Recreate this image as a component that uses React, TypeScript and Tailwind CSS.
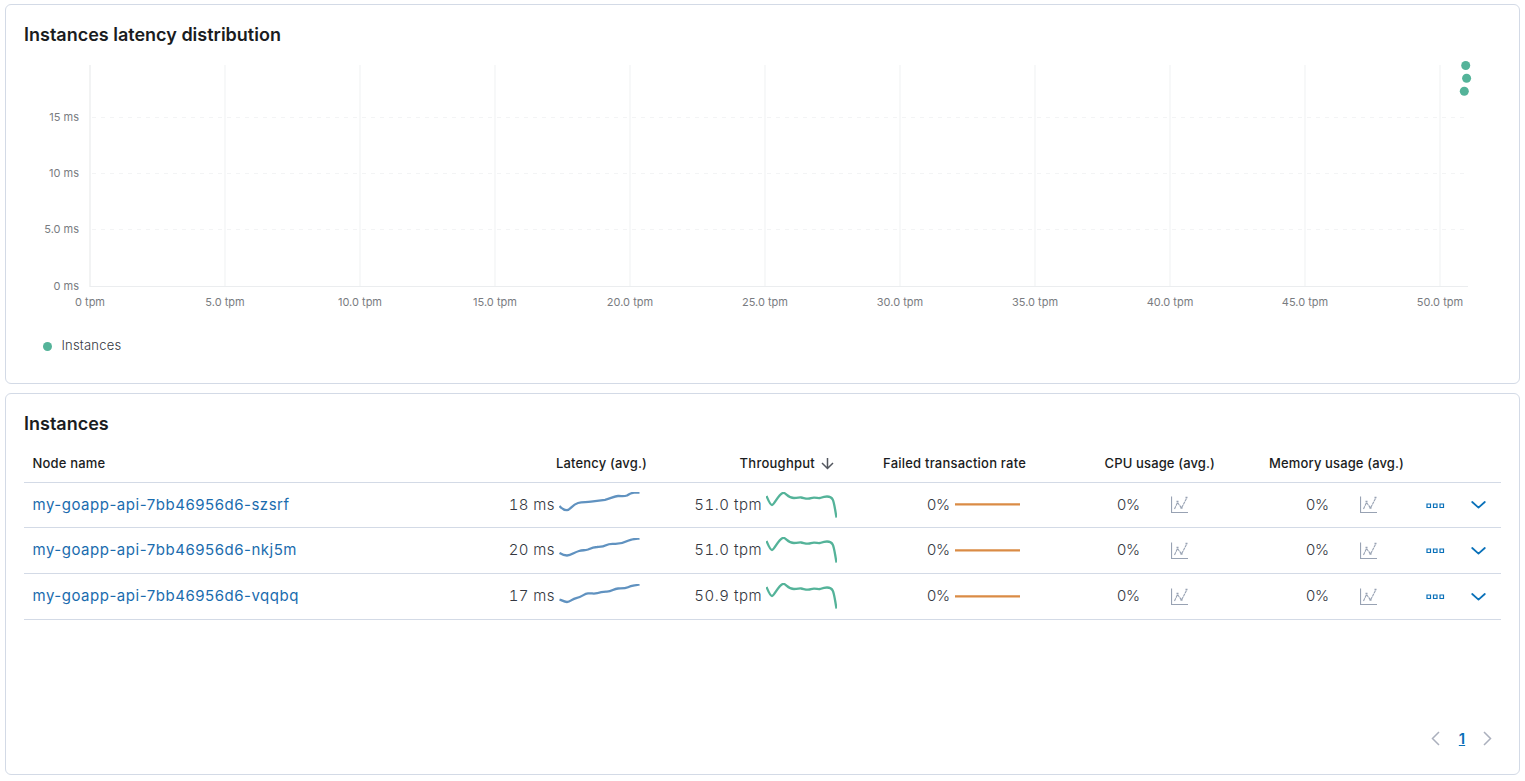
import React from 'react';

interface InstanceRow {
  name: string;
  latency: string;
  throughput: string;
  failedRate: string;
  cpu: string;
  memory: string;
  latencyPath: string;
  rowClass: string;
}

const THROUGHPUT_PATH =
  'M0.5 4 C2 7.5 4 13 6 13 C8.5 13 13 0.8 17.5 0.8 C20 0.8 22 6 28 6 C32 6 33 5.3 35 5.5 C38 6 39 6.7 42 6.7 C45 6.7 45 5.7 48 5.7 C51 5.7 52 6.3 54 6 C57 5 59 4.5 61 4.5 C68 4.5 67.5 9 70.5 25.5';

const rows: InstanceRow[] = [
  {
    name: 'my-goapp-api-7bb46956d6-szsrf',
    latency: '18 ms',
    throughput: '51.0 tpm',
    failedRate: '0%',
    cpu: '0%',
    memory: '0%',
    latencyPath:
      'M0.5 14 C3 17 6 18.2 8 18.2 C11 18.2 13 13 19 11 C24 9.8 27 10.5 32 9.7 L46 7.8 C52 6.5 55 4.2 59 4 C63 3.9 65 4.5 68 3.5 C71 1.5 72 1 75 0.7 L80.5 0.5',
    rowClass: 'h-[45px]',
  },
  {
    name: 'my-goapp-api-7bb46956d6-nkj5m',
    latency: '20 ms',
    throughput: '51.0 tpm',
    failedRate: '0%',
    cpu: '0%',
    memory: '0%',
    latencyPath:
      'M0.5 15 C3 16.5 6 17.5 8 17.5 C12 17.5 15 14.5 20 13 C24 12 26 12.5 29 11.5 C33 9.7 35 9 38 9 C42 8.8 44 9 47 7.3 C50 5.6 51 5.7 55 5.9 C62 6.3 65 4.8 69 2.8 C73 1 75 1 80.5 0.5',
    rowClass: 'h-[46px]',
  },
  {
    name: 'my-goapp-api-7bb46956d6-vqqbq',
    latency: '17 ms',
    throughput: '50.9 tpm',
    failedRate: '0%',
    cpu: '0%',
    memory: '0%',
    latencyPath:
      'M0.5 15.5 C3 16.5 6 18 8 18 C12 18 12 15 18 13.8 C23 13 25 9.7 29 9.4 C33 9.2 35 10 38 9.2 C41 8 44 7.6 47 7.6 C53 8.1 54 4.7 59 4.5 C64 4.4 66 4.7 69 3.2 C73 1.6 76 1.6 80.5 0.3',
    rowClass: 'h-[46px]',
  },
];

const xTicks = ['0', '5.0', '10.0', '15.0', '20.0', '25.0', '30.0', '35.0', '40.0', '45.0', '50.0'];

const yTicks = [
  { label: '15 ms', y: 117.5 },
  { label: '10 ms', y: 173.5 },
  { label: '5.0 ms', y: 229.5 },
  { label: '0 ms', y: 286.5 },
];

const points = [
  { x: 1465.7, y: 65.5 },
  { x: 1466.6, y: 78.3 },
  { x: 1464.3, y: 91.3 },
];

const GRID = 'grid grid-cols-[446px_185px_188px_191px_189px_189px_45px_44px]';

function LatencyChart() {
  return (
    <svg className="block h-[265px] w-full" viewBox="6 55 1513 265">
      {/* Grid lines */}
      {xTicks.map((tick, i) => (
        <line
          key={tick}
          x1={90 + i * 135}
          x2={90 + i * 135}
          y1={65}
          y2={287}
          stroke={i === 0 ? '#eff0f1' : '#f4f5f6'}
          strokeWidth={i === 0 ? 1.6 : 1.4}
        />
      ))}
      {yTicks.slice(0, 3).map((tick) => (
        <line key={tick.label} x1={92} x2={1468} y1={tick.y} y2={tick.y} stroke="#f3f4f5" strokeDasharray="4 5" />
      ))}
      <line x1={90} x2={1468} y1={286.5} y2={286.5} stroke="#ebedef" />

      {/* Axis labels */}
      <g className="fill-[#797c81] font-['Inter'] text-[11px]">
        {yTicks.map((tick) => (
          <text key={tick.label} x={79} y={tick.y + 3.5} textAnchor="end">
            {tick.label}
          </text>
        ))}
        {xTicks.map((tick, i) => (
          <text key={tick} x={90 + i * 135} y={306} textAnchor="middle">
            {tick} tpm
          </text>
        ))}
      </g>

      {points.map((p) => (
        <circle key={p.y} cx={p.x} cy={p.y} r={4.5} fill="#54b399" />
      ))}
    </svg>
  );
}

function Sparkline({ path, color, className }: { path: string; color: string; className: string }) {
  return (
    <svg className={className} fill="none" stroke={color} strokeWidth={2.3}>
      <path d={path} />
    </svg>
  );
}

function EmptyChartIcon() {
  return (
    <svg className="h-[18px] w-[18px]" viewBox="0 0 18 18" fill="none" stroke="#98a2b3">
      <path d="M0.5 0.5V16.5H17" strokeWidth={1.2} />
      <path d="M3.5 13L6.5 6.5L10.5 12L15.5 2.5" strokeWidth={1.1} strokeDasharray="3 0.6" />
      <path d="M5.5 5.5h2M9.5 12h2M14.5 1.5h2" strokeWidth={1.6} />
    </svg>
  );
}

function UsageCell({ value }: { value: string }) {
  return (
    <div className="flex items-center justify-end pr-2">
      <span className="tracking-[-0.1px]">{value}</span>
      <span className="flex w-[75px] justify-center pl-1">
        <EmptyChartIcon />
      </span>
    </div>
  );
}

function InstancesTable() {
  return (
    <div className="mx-[18px] mt-[10px]">
      <div
        className={`${GRID} h-[39px] items-center border-b border-[#d3dae6] pt-0.5 text-right text-[13px] font-medium tracking-[0.17px] text-[#1a1c21]`}
      >
        <div className="pl-[8.5px] text-left">Node name</div>
        <div className="pr-2">Latency (avg.)</div>
        <div className="flex items-center justify-end pr-[9px]">
          <span className="tracking-[0.25px]">Throughput</span>
          <svg
            className="mb-px ml-1.5 h-[13px] w-[13px]"
            viewBox="0 0 13 13"
            fill="none"
            stroke="#53575f"
            strokeWidth={1.5}
          >
            <path d="M6.5 1V11.5M1 6L6.5 11.5L12 6" />
          </svg>
        </div>
        <div className="pr-2 tracking-[0.21px]">Failed transaction rate</div>
        <div className="pr-2 tracking-[0.13px]">CPU usage (avg.)</div>
        <div className="pr-2 tracking-[0.13px]">Memory usage (avg.)</div>
      </div>

      {rows.map((row) => (
        <div
          key={row.name}
          className={`${GRID} ${row.rowClass} items-center border-b border-[#d3dae6] text-[15px] font-light text-[#343741]`}
        >
          <a href="#" className="pl-[8.5px] font-normal tracking-[0.52px] text-[#1a6cae]">
            {row.name}
          </a>
          <div className="flex items-center justify-end gap-1 pr-2">
            <span className="tabular-nums tracking-[0.4px]">{row.latency}</span>
            <Sparkline path={row.latencyPath} color="#6092c0" className="mb-px h-[25px] w-[88px]" />
          </div>
          <div className="flex items-center justify-end gap-1 pr-[6px]">
            <span className="tabular-nums tracking-[0.5px]">{row.throughput}</span>
            <Sparkline path={THROUGHPUT_PATH} color="#54b399" className="mb-px h-[26px] w-[71px]" />
          </div>
          <div className="flex items-center justify-end gap-[5px] pr-2">
            <span className="tracking-[-0.1px]">{row.failedRate}</span>
            <Sparkline path="M0 12.3H65" color="#da8b45" className="mb-px h-[25px] w-[71px]" />
          </div>
          <UsageCell value={row.cpu} />
          <UsageCell value={row.memory} />
          <button className="flex justify-center pl-px" aria-label="Actions">
            <svg className="mt-px h-[6px] w-[19px]" viewBox="0 0 19 6" fill="none" stroke="#0a71b9" strokeWidth={1.2}>
              <path d="M1 1h3.5v3.5h-3.5zM7.5 1h3.5v3.5h-3.5zM14 1h3.5v3.5h-3.5z" />
            </svg>
          </button>
          <button className="flex justify-center pr-px" aria-label="Expand">
            <svg className="h-[8px] w-[15px]" viewBox="0 0 15 8" fill="none" stroke="#0a71b9" strokeWidth={1.8}>
              <path d="M1.2 1L7.5 6.6L13.8 1" strokeLinecap="round" strokeLinejoin="round" />
            </svg>
          </button>
        </div>
      ))}
    </div>
  );
}

function Pagination() {
  return (
    <div className="mt-auto mr-[27px] mb-[24px] flex items-center justify-end text-[15px] font-semibold text-[#0a71b9]">
      <svg className="h-[15px] w-[9px]" viewBox="0 0 9 15" fill="none" stroke="#abb0bd" strokeWidth={1.5}>
        <path d="M8 1L1.5 7.5L8 14" />
      </svg>
      <span className="w-[43px] pl-px text-center underline">1</span>
      <svg className="h-[15px] w-[9px]" viewBox="0 0 9 15" fill="none" stroke="#abb0bd" strokeWidth={1.5}>
        <path d="M1 1L7.5 7.5L1 14" />
      </svg>
    </div>
  );
}

export default function App() {
  return (
    <div className="flex h-[781px] w-[1525px] flex-col gap-[9px] bg-white pt-1 pr-[5px] pl-[5px] font-['Inter',sans-serif]">
      <section className="h-[380px] rounded-md border border-[#d3dae6] bg-white">
        <h2 className="h-[50px] pt-[17px] pl-[18px] text-[18px] leading-[25px] font-semibold text-[#1a1c21]">
          Instances latency distribution
        </h2>
        <LatencyChart />
        <div className="mt-[16px] ml-[37px] flex h-[20px] items-center text-[13px] font-light tracking-[0.2px] text-[#343741]">
          <span className="mr-[9.5px] h-[9px] w-[9px] rounded-full bg-[#54b399]" />
          Instances
        </div>
      </section>

      <section className="flex h-[382px] flex-col rounded-md border border-[#d3dae6] bg-white">
        <h2 className="h-[40px] pt-[17px] pl-[18px] text-[18px] leading-[25px] font-semibold text-[#1a1c21]">
          Instances
        </h2>
        <InstancesTable />
        <Pagination />
      </section>
    </div>
  );
}
